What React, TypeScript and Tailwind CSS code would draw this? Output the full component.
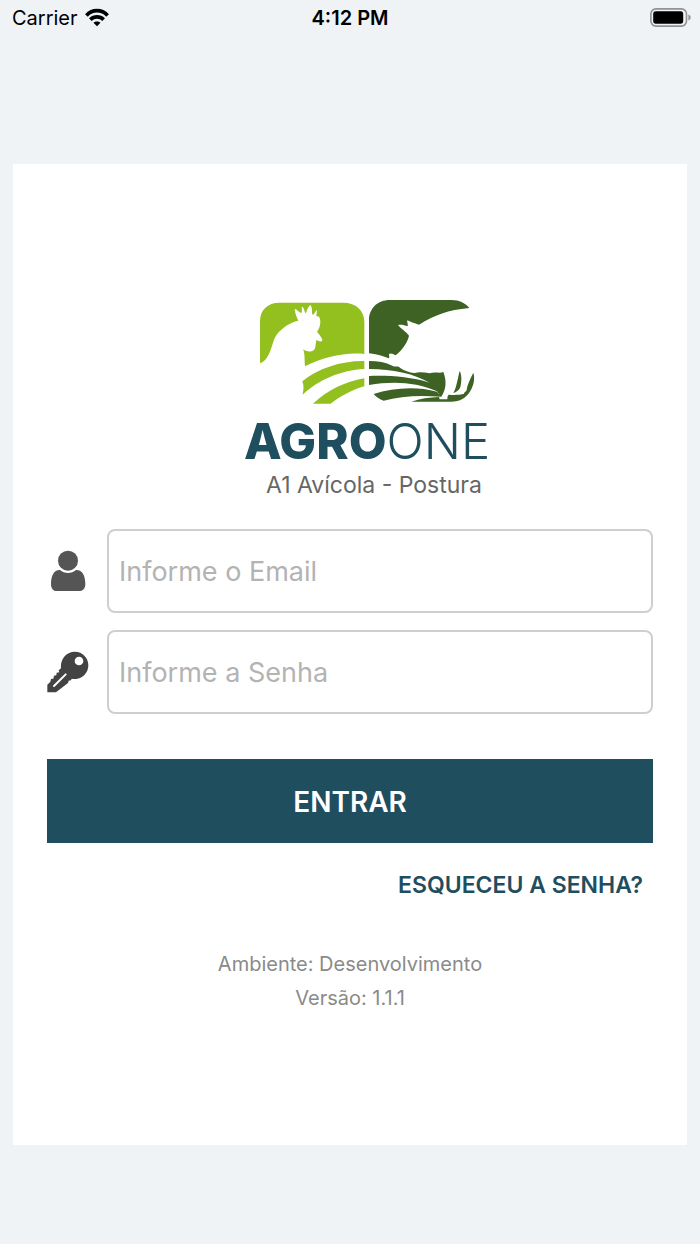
import { FormEvent, ReactNode } from 'react';

const WifiIcon = () => (
  <svg className="h-5 w-[26px]" viewBox="0 0 28 20" fill="none" stroke="#000" strokeWidth="4">
    <path d="M2.6 7.2 C9 0.4 19 0.4 25.4 7.2" />
    <path d="M6.8 11.8 C11 7.8 17 7.8 21.2 11.8" />
    <path d="M14 18.8 L10.2 15.2 C12.2 13.2 15.8 13.2 17.8 15.2 Z" fill="#000" stroke="none" />
  </svg>
);

const BatteryIcon = () => (
  <svg className="h-5 w-[42px]" viewBox="0 0 42 20">
    <rect x="0.9" y="0.9" width="35.6" height="17.2" rx="5" fill="none" stroke="#909396" strokeWidth="1.6" />
    <rect x="3.2" y="3.3" width="30" height="12.4" rx="2.6" fill="#000" />
    <path d="M38.4 6.5 C41.4 7.5 41.4 11.5 38.4 12.5 Z" fill="#909396" />
  </svg>
);

const StatusBar = () => (
  <header className="grid h-9 grid-cols-3 items-center px-3 font-['Inter',sans-serif] text-xl text-black">
    <div className="flex items-center gap-1.5">
      <span>Carrier</span>
      <WifiIcon />
    </div>
    <span className="text-center font-semibold">4:12 PM</span>
    <div className="-mr-1 flex justify-end">
      <BatteryIcon />
    </div>
  </header>
);

const LogoMark = () => (
  <svg className="h-[106px] w-[216px]" viewBox="73 27 648 318" role="img" aria-label="AgroOne">
    <g fill="#93c01f">
      <path d="M76 220 V95 C76 60 98 38 135 38 H325 C365 38 389 62 389 95 V192 C330 186 265 202 211 229 C209 205 211 190 205 178 C218 188 240 187 242 170 C244 160 243 153 246 150 C252 155 262 156 263 151 C262 143 253 132 247 125 C258 112 260 90 253 80 L245 78 L247 60 C243 62 238 72 235 76 L232 70 C233 55 229 45 227 45 C222 48 217 58 215 67 L212 70 C208 55 204 50 202 50 C200 55 203 62 201 68 C195 70 184 55 180 57 C181 72 188 85 191 92 C160 98 125 125 117 152 C108 180 100 212 76 220 Z" />
      <path d="M389 213 V237 C320 240 250 270 204 314 C206 300 209 290 203 274 C250 235 320 212 389 213 Z" />
      <path d="M389 265 V289 C355 298 315 320 288 341 H235 C280 300 330 275 389 265 Z" />
    </g>
    <g fill="#3d6223" transform="translate(375 0)">
      <path d="M28 190 V90 C28 55 55 30 90 30 H275 C300 30 318 40 329 54 C265 60 225 75 178 104 C165 100 150 95 143 91 C141 95 146 103 144 109 C135 105 122 103 115 105 C122 115 140 125 148 137 C145 155 128 180 108 196 C100 190 90 188 88 193 C87 198 92 201 87 205 C68 197 48 193 28 190 Z" />
      <path d="M28 213 C55 213 78 217 98 227 C106 232 112 228 118 231 C128 240 145 247 165 249 C180 245 195 248 210 250 C225 244 240 251 251 246 C260 270 262 296 244 322 L232 304 C170 276 100 272 28 285 V258 C90 256 150 260 210 278 C160 250 100 238 28 237 Z" />
      <path d="M42 312 C100 293 170 288 232 305 L244 320 C180 315 120 318 72 332 C60 328 48 320 42 312 Z" />
      <path d="M300 243 C307 255 306 275 302 292 C297 302 290 307 281 309 C291 292 294 265 300 243 Z" />
      <path d="M341 248 C346 262 343 285 332 303 C320 324 300 335 275 335 H155 C180 326 210 322 238 321 L240 328 H263 C263 322 264 316 267 314 C285 316 303 314 312 312 C314 306 318 306 321 301 C322 286 331 268 341 248 Z" />
    </g>
  </svg>
);

const UserIcon = () => (
  <svg className="ml-1 h-[42px] w-[35px]" viewBox="0 0 105 126" fill="#555">
    <circle cx="51" cy="32" r="30" />
    <path d="M27 60 C40 72 62 72 75 60 C94 59 103 78 103 101 C103 116 96 123 83 123 H19 C6 123 0 116 0 101 C0 78 9 59 27 60 Z" />
  </svg>
);

const KeyIcon = () => (
  <svg className="h-[42px] w-[42px]" viewBox="36 395 126 126" fill="#434343">
    <path
      fillRule="evenodd"
      d="M119 397 A41 41 0 1 1 110 478 L108 483 L101 484 L99 491 L63 519 H37 V496 L46 487 L48 479 L55 478 L57 469 L64 468 L65 460 L73 459 L71 453 L78 447 C75 420 94 397 119 397 Z M132 412 A13 13 0 1 0 132 438 A13 13 0 1 0 132 412 Z"
    />
    <path d="M57 500 L92 465" stroke="#fff" strokeWidth="6" strokeLinecap="round" />
  </svg>
);

type FieldProps = {
  id: string;
  type: string;
  label: string;
  icon: ReactNode;
};

const Field = ({ id, type, label, icon }: FieldProps) => (
  <div className="flex items-center">
    <label htmlFor={id} aria-label={label} className="w-[60px] shrink-0">
      {icon}
    </label>
    <input
      id={id}
      type={type}
      placeholder={label}
      className="h-[84px] min-w-0 flex-1 rounded-lg border-2 border-[#cfcfcf] px-[10px] text-[27px] text-[#555] placeholder:text-[#b3b3b3]"
    />
  </div>
);

export default function App() {
  const handleSubmit = (e: FormEvent) => e.preventDefault();

  return (
    <div className="min-h-screen bg-[#eff3f6] pb-[99px] font-['Inter',sans-serif]">
      <StatusBar />
      <main className="mx-[13px] mt-32 bg-white px-[34px] pt-[135px] pb-[130px]">
        <div className="flex flex-col items-center pl-[34px]">
          <LogoMark />
          <h1 className="mt-[13px] text-[49px] leading-[48px] font-extrabold text-[#1f4e5f]">
            AGRO<span className="font-light">ONE</span>
          </h1>
          <p className="mt-[7px] pl-[14px] text-[23px] leading-6 text-[#666]">A1 Avícola - Postura</p>
        </div>
        <form className="mt-8 flex flex-col" onSubmit={handleSubmit}>
          <div className="flex flex-col gap-[17px]">
            <Field id="email" type="email" label="Informe o Email" icon={<UserIcon />} />
            <Field id="senha" type="password" label="Informe a Senha" icon={<KeyIcon />} />
          </div>
          <button type="submit" className="mt-[45px] h-[84px] bg-[#1f4e5f] pt-0.5 text-[28px] font-semibold text-white">
            ENTRAR
          </button>
          <a href="#" className="mt-[27px] mr-[10px] self-end text-[23px] leading-[30px] font-semibold text-[#1f4e5f]">
            ESQUECEU A SENHA?
          </a>
        </form>
        <footer className="mt-[47px] text-center text-xl leading-[34px] text-[#8a8a8a]">
          <p>Ambiente: Desenvolvimento</p>
          <p>Versão: 1.1.1</p>
        </footer>
      </main>
    </div>
  );
}
